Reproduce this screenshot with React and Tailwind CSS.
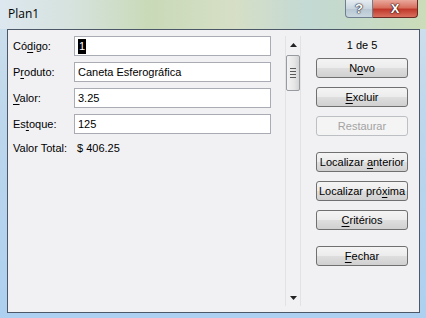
import clsx from "clsx";

const FONT = { fontFamily: '"Liberation Sans", Arial, sans-serif' };

function U({ children }) {
  return <span className="underline underline-offset-[2px]">{children}</span>;
}

function Field({ label, value, selected }) {
  return (
    <div className="flex h-[20px] items-center">
      <div className="w-[66px] pl-[5px] text-[11px] text-black">{label}</div>
      <div className="flex h-[20px] w-[197px] items-center border border-[#a9adb3] bg-white px-[3px] text-[11px] text-black">
        {selected ? (
          <span className="bg-black px-[1px] leading-[15px] text-white">{value}</span>
        ) : (
          <span>{value}</span>
        )}
      </div>
    </div>
  );
}

function Btn({ children, disabled }) {
  return (
    <div
      className={clsx(
        "flex h-[20px] w-[92px] items-center justify-center rounded-[3px] border text-[11px]",
        disabled
          ? "border-[#bcc0c4] bg-[#f4f4f4] text-[#a3a3a3]"
          : "border-[#707070] bg-[linear-gradient(to_bottom,#f4f4f4_0%,#ececec_48%,#dedede_52%,#d0d0d0_100%)] text-black"
      )}
    >
      <span className="whitespace-pre">{children}</span>
    </div>
  );
}

function Scrollbar() {
  return (
    <div className="mt-[6px] flex h-[270px] w-[16px] flex-col items-center border-x border-[#e2e2e6]">
      <div className="flex h-[17px] w-full items-center justify-center">
        <svg width="7" height="4" viewBox="0 0 7 4">
          <path d="M0 4 L3.5 0 L7 4 Z" fill="#222" />
        </svg>
      </div>
      <div className="mt-[2px] flex h-[36px] w-[14px] flex-col items-center justify-center gap-[2px] rounded-[2px] border border-[#979a9e] bg-[linear-gradient(to_right,#f3f3f3,#e6e6e6_60%,#d4d4d4)]">
        <div className="h-px w-[6px] bg-[#5a5a5a]" />
        <div className="h-px w-[6px] bg-[#5a5a5a]" />
        <div className="h-px w-[6px] bg-[#5a5a5a]" />
        <div className="h-px w-[6px] bg-[#5a5a5a]" />
      </div>
      <div className="flex-1" />
      <div className="flex h-[17px] w-full items-center justify-center">
        <svg width="7" height="4" viewBox="0 0 7 4">
          <path d="M0 0 L7 0 L3.5 4 Z" fill="#222" />
        </svg>
      </div>
    </div>
  );
}

export default function App() {
  return (
    <div
      className="relative flex h-[318px] w-[426px] flex-col overflow-hidden bg-[linear-gradient(180deg,#cfe0ec_0%,#bcd6ec_40%,#add0f0_100%)]"
      style={FONT}
    >
      {/* title bar */}
      <div className="relative flex h-[29px] shrink-0 bg-[linear-gradient(90deg,#dde7ef_0%,#d5e2dc_18%,#c9dab8_35%,#d6dfc6_55%,#c3d9d4_72%,#cadcb8_100%)]">
        <div
          className="pl-[8px] pt-[5px] text-[12px] text-black"
          style={{ fontFamily: '"Open Sans", "Noto Sans", sans-serif' }}
        >
          Plan1
        </div>
        <div className="absolute right-[8px] top-0 flex">
          <div className="flex h-[18px] w-[28px] items-center justify-center rounded-bl-[4px] border border-t-0 border-[#6f7f8f] bg-[linear-gradient(to_bottom,#e6edf2,#c9d5de_50%,#b7c6d2_52%,#cad7e0)]">
            <span
              className="text-[13px] font-bold leading-none text-white"
              style={{ textShadow: "0 0 1px #223, 0 0 1px #223, 0 0 2px #334" }}
            >
              ?
            </span>
          </div>
          <div className="flex h-[18px] w-[45px] items-center justify-center rounded-br-[4px] border border-l-0 border-t-0 border-[#6b2a24] bg-[linear-gradient(to_bottom,#e9a89c,#d8705f_45%,#c0392b_55%,#d9705e)]">
            <span
              className="text-[13px] font-bold leading-none text-white"
              style={{ textShadow: "0 0 1px #311, 0 0 1px #311, 0 0 2px #422" }}
            >
              X
            </span>
          </div>
        </div>
      </div>

      {/* client area */}
      <div className="mb-[5px] ml-[7px] mr-[6px] flex flex-1 border border-[#4c5867] bg-[#f1f0f3]">
        <div className="flex w-[276px] flex-col gap-[6px] pt-[6px]">
          <Field label={<>Có<U>d</U>igo:</>} value="1" selected />
          <Field label={<>P<U>r</U>oduto:</>} value="Caneta Esferográfica" />
          <Field label={<><U>V</U>alor:</>} value="3.25" />
          <Field label={<>Es<U>t</U>oque:</>} value="125" />
          <div className="flex h-[16px] items-center text-[11px] text-black">
            <div className="w-[69px] pl-[5px]">Valor Total:</div>
            <div>$ 406.25</div>
          </div>
        </div>

        <div className="ml-[1px]">
          <Scrollbar />
        </div>

        <div className="ml-[15px] flex flex-col">
          <div className="mt-[5px] flex h-[20px] items-center justify-center text-[11px] text-black">
            1 de 5
          </div>
          <div className="mt-[3px] flex flex-col gap-[9px]">
            <Btn>N<U>o</U>vo</Btn>
            <Btn><U>E</U>xcluir</Btn>
            <Btn disabled>Restaurar</Btn>
          </div>
          <div className="mt-[16px] flex flex-col gap-[9px]">
            <Btn>Localizar <U>a</U>nterior</Btn>
            <Btn>Localizar pró<U>x</U>ima</Btn>
            <Btn><U>C</U>ritérios</Btn>
          </div>
          <div className="mt-[16px]">
            <Btn><U>F</U>echar</Btn>
          </div>
        </div>
      </div>
    </div>
  );
}
